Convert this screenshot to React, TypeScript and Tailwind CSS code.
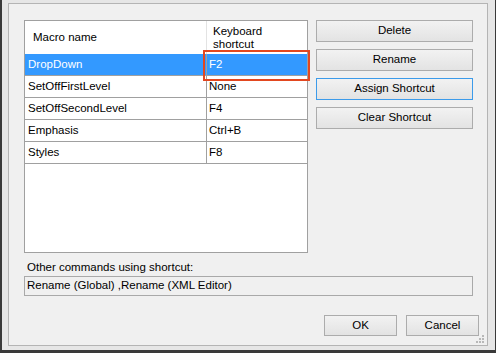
import React from "react";

const rows = [
  { name: "DropDown", key: "F2", sel: true },
  { name: "SetOffFirstLevel", key: "None" },
  { name: "SetOffSecondLevel", key: "F4" },
  { name: "Emphasis", key: "Ctrl+B" },
  { name: "Styles", key: "F8" },
];

function Btn({ label, focus, cls }: { label: string; focus?: boolean; cls: string }) {
  return (
    <div
      className={`${cls} flex items-center justify-center border bg-gradient-to-b from-[#f2f2f2] to-[#e3e3e3] text-[11.5px] text-black ${
        focus ? "border-[#3c9bea]" : "border-[#acacac]"
      }`}
    >
      {label}
    </div>
  );
}

export default function App() {
  return (
    <div
      className="w-[496px] h-[353px] bg-[#e6e6e6] border-l-2 border-b-[3px] border-r border-[#3a3a3a] pl-[6px] pt-[3px] pr-[7px] pb-[4px] text-black"
      style={{ fontFamily: '"Liberation Sans", Arial, sans-serif' }}
    >
      <div className="w-[480px] h-[343px] border border-[#b4b4b4] bg-[#f0f0f0] pt-[16px] pl-[15px] flex flex-col relative">
        <div className="flex gap-[8px]">
          <div className="relative w-[284px] h-[233px] border border-[#a0a0a0] bg-white">
            <div className="flex h-[33px] text-[11.5px]">
              <div className="w-[182px] border-r border-[#e3e3e3] flex items-center pl-[8px]">Macro name</div>
              <div className="flex-1 flex flex-col justify-center pl-[6px] leading-[13px]">
                <span>Keyboard</span>
                <span>shortcut</span>
              </div>
            </div>
            {rows.map((r) => (
              <div
                key={r.name}
                className={`flex h-[22px] border-b border-[#a0a0a0] text-[11.5px] ${
                  r.sel ? "bg-[#3399ff] text-white" : ""
                }`}
              >
                <div className="w-[182px] border-r border-[#a0a0a0] flex items-center pl-[3px]">{r.name}</div>
                <div className="flex-1 flex items-center pl-[2px]">{r.key}</div>
              </div>
            ))}
            <div className="absolute left-[178px] top-[29px] w-[107px] h-[31px] border-2 border-[#e2471f]" />
          </div>
          <div className="flex flex-col gap-[7px]">
            <Btn label="Delete" cls="w-[157px] h-[22px]" />
            <Btn label="Rename" cls="w-[157px] h-[22px]" />
            <Btn label="Assign Shortcut" focus cls="w-[157px] h-[22px]" />
            <Btn label="Clear Shortcut" cls="w-[157px] h-[22px]" />
          </div>
        </div>
        <div className="mt-[7px] h-[14px] leading-[14px] text-[11.5px] pl-[3px]">Other commands using shortcut:</div>
        <div className="mt-[2px] w-[449px] h-[20px] border border-[#a9a9a9] bg-[#f0f0f0] flex items-center pl-[2px] text-[11.5px]">
          Rename (Global) ,Rename (XML Editor)
        </div>
        <div className="mt-[19px] flex justify-end gap-[9px] pr-[8px]">
          <Btn label="OK" cls="w-[73px] h-[21px]" />
          <Btn label="Cancel" cls="w-[73px] h-[21px]" />
        </div>
        <svg className="absolute right-[2px] bottom-[1px]" width="10" height="10" viewBox="0 0 10 10">
          <rect x="7" y="1" width="2" height="2" fill="#b8b8b8" />
          <rect x="4" y="4" width="2" height="2" fill="#b8b8b8" />
          <rect x="7" y="4" width="2" height="2" fill="#b8b8b8" />
          <rect x="1" y="7" width="2" height="2" fill="#b8b8b8" />
          <rect x="4" y="7" width="2" height="2" fill="#b8b8b8" />
          <rect x="7" y="7" width="2" height="2" fill="#b8b8b8" />
        </svg>
      </div>
    </div>
  );
}
